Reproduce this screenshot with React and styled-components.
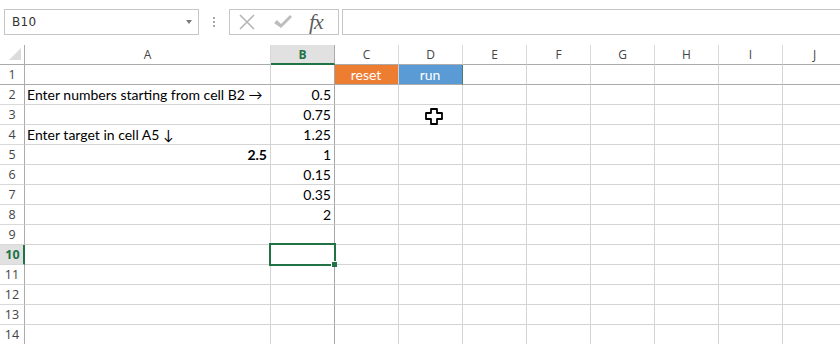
import React from "react";
import styled, { createGlobalStyle } from "styled-components";

const Global = createGlobalStyle`
  html, body { margin: 0; padding: 0; background: #fff; }
  body { width: 840px; height: 344px; overflow: hidden; }
  #root { width: 840px; height: 344px; }
`;

const Page = styled.div`
  position: relative;
  width: 840px;
  height: 344px;
  overflow: hidden;
  background: #fff;
  font-family: "Open Sans", "Liberation Sans", sans-serif;
`;

const Toolbar = styled.div`
  height: 45px;
  display: flex;
  align-items: flex-start;
  padding: 9px 0 0 4px;
  box-sizing: border-box;
`;

const NameBox = styled.div`
  width: 195px;
  height: 26px;
  box-sizing: border-box;
  border: 1px solid #c6c6c6;
  display: flex;
  align-items: center;
  justify-content: space-between;
  padding: 0 6px 0 7px;
  font-size: 12px;
  color: #333;
  font-family: "DejaVu Sans", "Liberation Sans", sans-serif;
  letter-spacing: 0.3px;
`;

const Caret = styled.span`
  width: 0;
  height: 0;
  border-left: 3.5px solid transparent;
  border-right: 3.5px solid transparent;
  border-top: 4px solid #7a7a7a;
`;

const Grip = styled.div`
  width: 30px;
  height: 26px;
  display: flex;
  flex-direction: column;
  align-items: center;
  justify-content: center;
  gap: 2px;
  span {
    width: 2px;
    height: 2px;
    background: #a8a8a8;
  }
`;

const FxBox = styled.div`
  width: 110px;
  height: 26px;
  box-sizing: border-box;
  border: 1px solid #c6c6c6;
  display: flex;
  align-items: center;
  padding-left: 8px;
  gap: 17px;
`;

const FxText = styled.span`
  font-family: "Liberation Serif", "DejaVu Serif", serif;
  font-style: italic;
  font-size: 22px;
  color: #5f5f5f;
  line-height: 1;
  margin-left: -1px;
  letter-spacing: -1px;
`;

const FormulaInput = styled.div`
  flex: 1;
  height: 26px;
  margin-left: 3px;
  box-sizing: border-box;
  border: 1px solid #c6c6c6;
  border-right: none;
`;

const Sheet = styled.div`
  position: relative;
  display: grid;
  grid-template-columns: 25px 246px repeat(9, 64px);
  grid-auto-rows: 20px;
  width: 847px;
`;

const Corner = styled.div`
  box-sizing: border-box;
  border-right: 1px solid #ababab;
  border-bottom: 1px solid #ababab;
  position: relative;
  &::after {
    content: "";
    position: absolute;
    right: 3px;
    bottom: 4px;
    width: 0;
    height: 0;
    border-left: 12px solid transparent;
    border-bottom: 12px solid #dcdcdc;
  }
`;

const ColHeader = styled.div`
  box-sizing: border-box;
  border-right: 1px solid ${(p) => (p.$dark ? "#ababab" : "#d9d9d9")};
  border-bottom: ${(p) => (p.$sel ? "2px solid #217346" : "1px solid #ababab")};
  background: ${(p) => (p.$sel ? "#e1e1e1" : "#fff")};
  color: ${(p) => (p.$sel ? "#217346" : "#444")};
  font-weight: ${(p) => (p.$sel ? 700 : 400)};
  font-size: 12px;
  display: flex;
  align-items: center;
  justify-content: center;
  padding-top: ${(p) => (p.$sel ? "1px" : "0")};
`;

const RowHeader = styled.div`
  box-sizing: border-box;
  border-right: ${(p) => (p.$sel ? "2px solid #217346" : "1px solid #ababab")};
  border-bottom: 1px solid ${(p) => (p.$darkBottom ? "#ababab" : "#d9d9d9")};
  background: ${(p) => (p.$sel ? "#e1e1e1" : "#fff")};
  color: ${(p) => (p.$sel ? "#217346" : "#444")};
  font-weight: ${(p) => (p.$sel ? 700 : 400)};
  font-size: 12.5px;
  display: flex;
  align-items: center;
  justify-content: center;
  padding-left: ${(p) => (p.$sel ? "2px" : "0")};
`;

const Cell = styled.div`
  box-sizing: border-box;
  border-right: 1px solid ${(p) => p.$rightColor || "#d4d4d4"};
  border-bottom: 1px solid ${(p) => (p.$darkBottom ? "#ababab" : "#d4d4d4")};
  background: ${(p) => p.$bg || "#fff"};
  color: ${(p) => p.$color || "#000"};
  font-family: "Lato", "Open Sans", sans-serif;
  font-size: 14px;
  font-weight: ${(p) => (p.$bold ? 700 : 400)};
  display: flex;
  align-items: flex-end;
  justify-content: ${(p) =>
    p.$align === "right" ? "flex-end" : p.$align === "center" ? "center" : "flex-start"};
  padding: 0 3px 1px 2px;
  white-space: nowrap;
  overflow: visible;
  line-height: 17px;
`;

const Selection = styled.div`
  position: absolute;
  left: 269px;
  top: 198px;
  width: 67px;
  height: 23px;
  box-sizing: border-box;
  border: 2px solid #217346;
  pointer-events: none;
  &::after {
    content: "";
    position: absolute;
    right: -3px;
    bottom: -3px;
    width: 5px;
    height: 5px;
    background: #217346;
    border-left: 1px solid #fff;
    border-top: 1px solid #fff;
  }
`;

const Cursor = styled.svg`
  position: absolute;
  left: 425px;
  top: 108px;
`;

const columns = ["A", "B", "C", "D", "E", "F", "G", "H", "I", "J"];

const data = {
  "A2": { v: "Enter numbers starting from cell B2 \u2192" },
  "B2": { v: "0.5", align: "right" },
  "B3": { v: "0.75", align: "right" },
  "A4": { v: "Enter target in cell A5 \u2193" },
  "B4": { v: "1.25", align: "right" },
  "A5": { v: "2.5", align: "right", bold: true },
  "B5": { v: "1", align: "right" },
  "B6": { v: "0.15", align: "right" },
  "B7": { v: "0.35", align: "right" },
  "B8": { v: "2", align: "right" },
  "C1": { v: "reset", align: "center", bg: "#ed7d31", color: "#fff" },
  "D1": { v: "run", align: "center", bg: "#5b9bd5", color: "#fff", right: "#4d7c6c" },
};

const XIcon = () => (
  <svg width="18" height="16" viewBox="0 0 18 16">
    <path d="M2 1 L16 15 M16 1 L2 15" stroke="#b5b5b5" strokeWidth="1.6" fill="none" />
  </svg>
);

const CheckIcon = () => (
  <svg width="20" height="16" viewBox="0 0 20 16">
    <path d="M1 9 L4 6 L8 10 L17 1 L19 3 L8 14 Z" fill="#bdbdbd" />
  </svg>
);

export default function App() {
  const rows = Array.from({ length: 14 }, (_, i) => i + 1);
  return (
    <Page>
      <Global />
      <Toolbar>
        <NameBox>
          <span>B10</span>
          <Caret />
        </NameBox>
        <Grip>
          <span />
          <span />
          <span />
        </Grip>
        <FxBox>
          <XIcon />
          <CheckIcon />
          <FxText>fx</FxText>
        </FxBox>
        <FormulaInput />
      </Toolbar>
      <Sheet>
        <Corner />
        {columns.map((c) => (
          <ColHeader key={c} $sel={c === "B"} $dark={c === "B"}>
            {c}
          </ColHeader>
        ))}
        {rows.map((r) => (
          <React.Fragment key={r}>
            <RowHeader $sel={r === 10} $darkBottom={r === 1}>
              {r}
            </RowHeader>
            {columns.map((c) => {
              const d = data[c + r] || {};
              return (
                <Cell
                  key={c}
                  $align={d.align}
                  $bold={d.bold}
                  $bg={d.bg}
                  $color={d.color}
                  $rightColor={c === "B" ? "#a6a6a6" : d.right}
                  $darkBottom={r === 1}
                >
                  {d.v || ""}
                </Cell>
              );
            })}
          </React.Fragment>
        ))}
        <Selection />
      </Sheet>
      <Cursor width="18" height="17" viewBox="0 0 18 17">
        <path
          d="M6 1 H12 V5 H17 V11 H12 V16 H6 V11 H1 V5 H6 Z"
          fill="#fff"
          stroke="#000"
          strokeWidth="1.8"
          strokeLinejoin="round"
        />
      </Cursor>
    </Page>
  );
}
